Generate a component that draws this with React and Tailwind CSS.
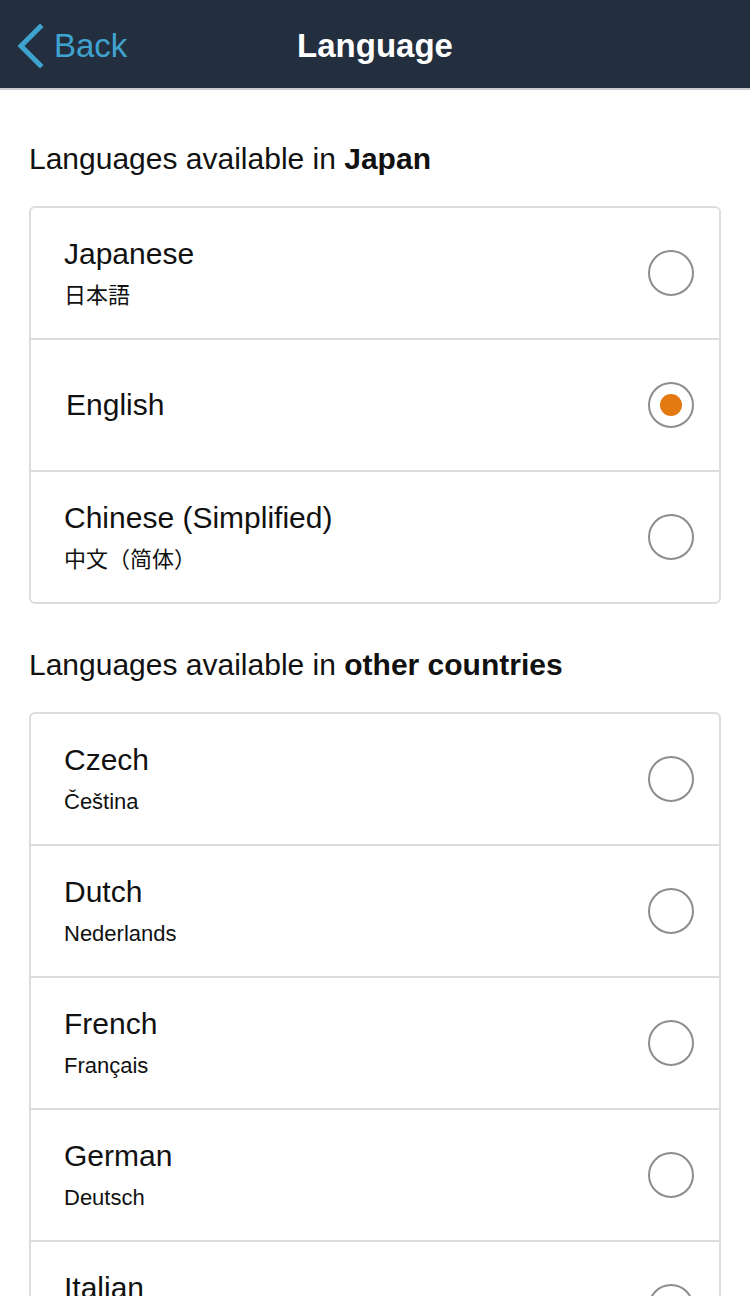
import React, { useState } from "react";

const japanLanguages = [
  { id: "ja", name: "Japanese", native: "日本語" },
  { id: "en", name: "English" },
  { id: "zh", name: "Chinese (Simplified)", native: "中文（简体）" },
];

const otherLanguages = [
  { id: "cs", name: "Czech", native: "Čeština" },
  { id: "nl", name: "Dutch", native: "Nederlands" },
  { id: "fr", name: "French", native: "Français" },
  { id: "de", name: "German", native: "Deutsch" },
  { id: "it", name: "Italian", native: "Italiano" },
];

function Radio({ checked }) {
  return (
    <span className="flex h-[46px] w-[46px] shrink-0 items-center justify-center rounded-full border-2 border-[#8d8d8d] bg-white">
      {checked && <span className="h-[22px] w-[22px] rounded-full bg-[#e47911]" />}
    </span>
  );
}

function LanguageList({ items, selected, onSelect }) {
  return (
    <div className="overflow-hidden rounded-[6px] border-2 border-[#dddddd] bg-white">
      {items.map((lang, i) => (
        <button
          key={lang.id}
          type="button"
          onClick={() => onSelect(lang.id)}
          className={
            "flex w-full items-center justify-between pl-[33px] pr-[25px] text-left " +
            (i > 0 ? "h-[132px] border-t-2 border-[#dddddd]" : "h-[130px]")
          }
        >
          <div className="flex flex-col">
            <span className={"text-[30px] leading-[34px] text-[#111111] " + (lang.native ? "" : "pl-[2px]")}>
              {lang.name}
            </span>
            {lang.native && (
              <span className="mt-[12px] text-[22px] leading-[26px] text-[#111111]">{lang.native}</span>
            )}
          </div>
          <Radio checked={selected === lang.id} />
        </button>
      ))}
    </div>
  );
}

export default function App() {
  const [selected, setSelected] = useState("en");

  return (
    <div
      className="min-h-[1296px] bg-white"
      style={{ fontFamily: '"Liberation Sans", Arial, "Noto Sans CJK JP", "Noto Sans CJK SC", sans-serif' }}
    >
      {/* top bar */}
      <div className="relative flex h-[90px] items-center border-b-2 border-[#c9cdd2] bg-[#232f3e] pt-[3px]">
        <button type="button" className="flex items-center pl-[15px] text-[#3fa3d0]">
          <svg width="30" height="44" viewBox="0 0 30 44" fill="none">
            <path d="M25 3 L6 22 L25 41" stroke="#3fa3d0" strokeWidth="5" strokeLinecap="square" />
          </svg>
          <span className="ml-[9px] text-[33px] leading-none">Back</span>
        </button>
        <h1 className="absolute left-1/2 -translate-x-1/2 text-[33px] font-bold leading-none text-white">
          Language
        </h1>
      </div>

      <div className="px-[29px] pt-[52px]">
        <h2 className="text-[30px] leading-[34px] text-[#111111]">
          Languages available in <b>Japan</b>
        </h2>
        <div className="mt-[30px]">
          <LanguageList items={japanLanguages} selected={selected} onSelect={setSelected} />
        </div>

        <h2 className="mt-[44px] text-[30px] leading-[34px] text-[#111111]">
          Languages available in <b>other countries</b>
        </h2>
        <div className="mt-[30px]">
          <LanguageList items={otherLanguages} selected={selected} onSelect={setSelected} />
        </div>
      </div>
    </div>
  );
}
